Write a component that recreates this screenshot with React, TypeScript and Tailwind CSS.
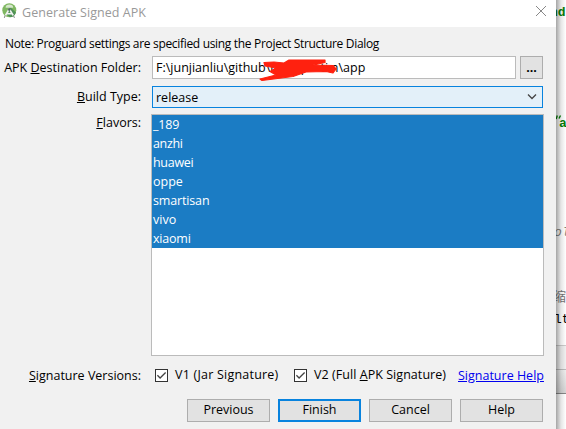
import React from "react";

const flavors: [string, string][] = [
  ["_189", "tracking-[-0.2px]"],
  ["anzhi", "tracking-[-0.35px]"],
  ["huawei", "tracking-[-0.3px]"],
  ["oppe", "tracking-[0px]"],
  ["smartisan", "tracking-[-0.15px]"],
  ["vivo", "tracking-[0px]"],
  ["xiaomi", "tracking-[-0.2px]"],
];

function AppIcon() {
  return (
    <svg width="15" height="16" viewBox="0 0 15 16" className="ml-[2px] mt-[3px] shrink-0">
      <circle cx="7.3" cy="7.3" r="7" fill="#7fb761" />
      <path d="M8 4L14 9.5Q12.4 14 8 14.3L4 11Z" fill="#4f9156" />
      <path d="M3.6 4.8a3.8 3.2 0 0 1 7.6 0z" fill="#d5e6cb" />
      <path d="M7.3 6L3.4 12.5M7.3 6l4 6.5M4.5 10q2.8 1.6 5.7 0" fill="none" stroke="#f2f2f2" strokeWidth="1.5" />
      <circle cx="7.3" cy="6.6" r="1.3" fill="#526b60" />
      <path d="M3.2 12.7l-.9 2.1M11.5 12.7l.9 2.1" stroke="#777" />
    </svg>
  );
}

function Check() {
  return (
    <span className="flex h-[13px] w-[13px] shrink-0 items-center justify-center border border-[#333] bg-white">
      <svg width="11" height="11" viewBox="0 0 11 11">
        <path d="M1.4 5.2L4.1 8L9.6 2.5" fill="none" stroke="#444" strokeWidth="1.3" />
      </svg>
    </span>
  );
}

function Button({ label, primary = false }: { label: string; primary?: boolean }) {
  return (
    <button
      className={
        primary
          ? "h-[23px] w-[83px] border-2 border-[#0883de] bg-[#e2e2e2] pb-[2px] leading-[17px]"
          : "h-[23px] w-[83px] border border-[#adadad] bg-[#e2e2e2] pb-[2px] leading-[19px]"
      }
    >
      {label}
    </button>
  );
}

function EditorEdge() {
  return (
    <div className="relative h-full w-[10px] overflow-hidden bg-white font-['Liberation_Mono','Noto_Sans_CJK_SC',monospace] text-[13px] leading-[16px]">
      <span className="absolute left-[-6px] top-[5px] font-bold text-[#078007]">nd</span>
      <svg className="absolute left-0 top-[115px]" width="6" height="5" viewBox="0 0 6 5">
        <path d="M1.3 .5L.2 4M4.5 .5L3 3.5" stroke="#078007" strokeWidth="1.4" />
      </svg>
      <span className="absolute left-[3px] top-[116px] font-bold text-[#078007]">a</span>
      <span className="absolute left-[-2px] top-[225px] italic text-[#808080]">ol</span>
      <span className="absolute left-[-3px] top-[290px] text-[#777]">缩</span>
      <span className="absolute left-[-2px] top-[312px] text-black">lt</span>
      <div className="absolute left-0 top-[345px] h-[49px] w-full border-b border-t border-b-[#888] border-t-[#ccc] bg-[#f0f0f0]">
        <div className="mt-[23px] h-[24px] border-t border-[#bbb] bg-linear-to-b from-[#eee] to-[#d5d5d5]" />
      </div>
      <div className="absolute inset-0 bg-linear-to-r from-black/35 via-black/10 to-transparent" />
    </div>
  );
}

export default function App() {
  return (
    <div className="flex h-[429px] w-[566px] overflow-hidden bg-white font-['Open_Sans','Noto_Sans',sans-serif] text-[12.5px] text-black">
      <main className="flex h-full w-[556px] shrink-0 flex-col bg-[#f1f1f1]">
        <header className="flex h-[27px] shrink-0 bg-white">
          <AppIcon />
          <h1 className="ml-[5px] mt-[3px] whitespace-nowrap text-[12.5px] leading-[19px] tracking-[0.05px] text-[#999]">Generate Signed APK</h1>
          <svg className="ml-auto mr-[10px] mt-[6px]" width="10" height="10" viewBox="0 0 10 10">
            <path d="M0 0L10 10M10 0L0 10" stroke="#888" strokeWidth="1" />
          </svg>
        </header>
        <p className="ml-[5px] mt-[7px] h-[18px] whitespace-nowrap text-[12px] leading-[19px] tracking-[-0.32px]">
          Note: Proguard settings are specified using the Project Structure Dialog
        </p>

        <div className="mt-[4px] flex h-[23px]">
          <label className="w-[141px] whitespace-nowrap text-right leading-[23px]">APK <u>D</u>estination Folder:</label>
          <div className="relative ml-[11px] h-[23px] w-[364px] border border-[#bbb] bg-white pl-[3px] leading-[22px]">
            <span className="whitespace-nowrap">F:\junjianliu\github\m<span className="inline-block w-[49px] pl-[19px]">p<span className="inline-block w-[12px]" />ti</span>n\app</span>
            <svg className="absolute left-[103px] top-0" width="90" height="26" viewBox="0 0 90 26">
              <path d="M8 5.5L18 5L28 6L33 3L69 3L69 5.5L57 8L77 8.5L80 12L77 16L70 14.5L50 15L37 19.5L6 23.5L4 22L20 18L14 14.5L20 11L9 9Z" fill="#ff210f" stroke="#ff210f" strokeWidth="1.2" strokeLinejoin="round" />
            </svg>
          </div>
          <button className="ml-[4px] h-[23px] w-[23px] border border-[#adadad] bg-[#e2e2e2] font-bold leading-[19px]">...</button>
        </div>

        <div className="mt-[7px] flex h-[22px]">
          <label className="w-[141px] text-right leading-[22px]"><u>B</u>uild Type:</label>
          <div className="ml-[11px] flex h-[22px] w-[391px] items-center border border-[#0883de] bg-[#e3f0f9] pl-[3px] pr-[5px]">
            <span className="pt-[2px] leading-[20px]">release</span>
            <svg className="ml-auto" width="10" height="6" viewBox="0 0 10 6">
              <path d="M1 .5L5 4.5L9 .5" fill="none" stroke="#444" strokeWidth="1.3" />
            </svg>
          </div>
        </div>

        <div className="mt-[6px] flex h-[242px]">
          <label className="w-[141px] text-right leading-[18px]"><u>F</u>lavors:</label>
          <ul className="ml-[10px] h-[242px] w-[393px] border border-[#bbb] bg-white">
            {flavors.map(([name, track]) => (
              <li key={name} className={"h-[19px] bg-[#1b7cc4] pl-[1px] leading-[20px] text-white " + track}>{name}</li>
            ))}
          </ul>
        </div>

        <div className="mt-[8px] flex h-[22px] items-center whitespace-nowrap">
          <label className="w-[141px] pt-[2px] text-right"><u>S</u>ignature Versions:</label>
          <div className="ml-[14px] flex w-[139px] items-center gap-[7px]"><Check /><span className="tracking-[0.22px]">V1 (<u>J</u>ar Signature)</span></div>
          <div className="flex w-[164px] items-center gap-[7px]"><Check /><span className="tracking-[0.05px]">V2 (Full <u>A</u>PK Signature)</span></div>
          <a className="pt-[2px] text-[#0000ee] underline">Signature Help</a>
        </div>

        <footer className="ml-[187px] mt-[13px] flex gap-[8px]">
          <Button label="Previous" />
          <Button label="Finish" primary />
          <Button label="Cancel" />
          <Button label="Help" />
        </footer>
      </main>
      <EditorEdge />
    </div>
  );
}
